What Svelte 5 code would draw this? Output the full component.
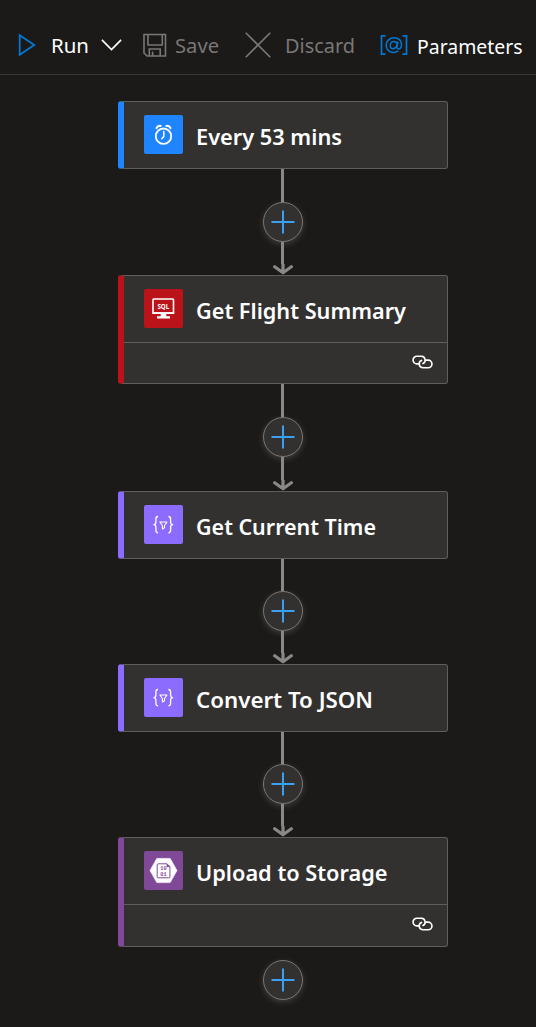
<script>
  const steps = [
    { title: 'Every 53 mins', width: 146, color: '#1e85ff', icon: 'clock', height: 68, link: 106, lead: 33 },
    { title: 'Get Flight Summary', width: 210, color: '#ba141a', icon: 'sql', height: 109, link: 107, lead: 33, linked: true },
    { title: 'Get Current Time', width: 180, color: '#8c6cff', icon: 'braces', height: 68, link: 105, lead: 32 },
    { title: 'Convert To JSON', width: 177, color: '#8c6cff', icon: 'braces', height: 68, link: 105, lead: 32 },
    { title: 'Upload to Storage', width: 191.5, color: '#804998', icon: 'blob', height: 110, link: 54, lead: 13, linked: true, last: true }
  ];
</script>

{#snippet label(text, width, size, baseline, boxHeight)}
  <svg class="label" width={width} height={boxHeight} style:font-size="{size}px">
    <text x="0" y={baseline} textLength={width} lengthAdjust="spacingAndGlyphs">{text}</text>
  </svg>
{/snippet}

<div class="app">
  <header class="toolbar">
    <button class="cmd run">
      <svg width="18" height="24" viewBox="0 0 18 24"><path d="M1.7 2.2V21.8L16.2 12Z" fill="none" stroke="#0078d4" stroke-width="1.8" /></svg>
      {@render label('Run', 38, 20, 22.5, 30)}
      <svg class="chevron" width="21" height="13" viewBox="0 0 21 13"><path d="M.9 1.9L10.5 11.5L20.1 1.9" fill="none" stroke="#fff" stroke-width="1.7" /></svg>
    </button>
    <button class="cmd save">
      <svg width="24" height="24" viewBox="0 0 24 24" fill="none" stroke="#797775" stroke-width="1.6">
        <path d="M1 1.5H22.5V23H4L1 20ZM5 1.5V12H19.3V1.5M6.3 23V16H17.2V23M9.6 18.5V23" />
      </svg>
      {@render label('Save', 44, 20, 22.5, 30)}
    </button>
    <button class="cmd discard">
      <svg width="26" height="26" viewBox="0 0 26 26"><path d="M.7 .7L25.3 25.3M25.3 .7L.7 25.3" fill="none" stroke="#797775" stroke-width="1.6" /></svg>
      {@render label('Discard', 70, 20, 22.5, 30)}
    </button>
    <button class="cmd params">
      <svg width="28" height="22" viewBox="0 0 28 22" fill="none" stroke="#0078d4" stroke-width="1.7">
        <path d="M5.5 1.8H1.5V20.2H5.5M22.5 1.8H26.5V20.2H22.5" />
        <path d="M18.3 16.9C12 20.6 6.2 16.8 6.2 11.3C6.2 6.7 9.8 3.8 14 3.8C18.6 3.8 21.5 6.6 21.5 10.2C21.5 13 20.1 14.9 18.5 14.9C17.2 14.9 16.8 13.8 17 12.5L17.9 7.5M17 10.1C16.8 6.7 10.2 6.2 10.2 11.8C10.2 16.3 15.9 15.3 17 11" stroke-width="1.5" />
      </svg>
      {@render label('Parameters', 105.5, 20, 23.5, 30)}
    </button>
  </header>

  <main class="flow">
    {#each steps as step}
      <article class="card" style:height="{step.height}px" style:--accent={step.color}>
        <div class="head">
          <span class="tile">
            {#if step.icon === 'clock'}
              <svg width="39" height="39" viewBox="0 0 39 39" fill="none" stroke="#fff" stroke-linecap="round">
                <circle cx="19.5" cy="21.2" r="7.7" stroke-width="1.8" />
                <path d="M19.8 16.5V21.5L17.8 23.8" stroke-width="1.5" />
                <path d="M12.5 13.2C13.2 11.7 14.8 10.7 16.7 10.9M26.5 13.2C25.8 11.7 24.2 10.7 22.3 10.9" stroke-width="2" />
              </svg>
            {:else if step.icon === 'sql'}
              <svg width="39" height="39" viewBox="0 0 39 39">
                <rect x="9" y="10" width="20.5" height="14" rx=".7" fill="none" stroke="#fff" stroke-width="1.6" />
                <path d="M8.2 23.2H30.3V25H8.2ZM16.7 25H22.3V27.2H26V29.5H13V27.2H16.7Z" fill="#fff" />
                <text class="sql" x="13.4" y="20.2" textLength="11.8" lengthAdjust="spacingAndGlyphs">SQL</text>
              </svg>
            {:else if step.icon === 'braces'}
              <svg width="39" height="39" viewBox="0 0 39 39" fill="none" stroke="#fff" stroke-width="1.3" stroke-linejoin="round">
                <path d="M14 11.5C12 11.5 11.9 12.5 11.9 14V17C11.9 18.6 11.5 19.5 9.9 19.6C11.5 19.7 11.9 20.7 11.9 22.2V25.3C11.9 26.8 12 27.8 14 27.8" />
                <path d="M24.4 11.5C26.4 11.5 26.6 12.5 26.6 14V17C26.6 18.6 27 19.5 28.6 19.6C27 19.7 26.6 20.7 26.6 22.2V25.3C26.6 26.8 26.4 27.8 24.4 27.8" />
                <path d="M15.9 17H22.9L20.5 20.5V22.7L18.4 24V20.5Z" stroke-width="1.1" />
              </svg>
            {:else}
              <svg width="39" height="39" viewBox="0 0 39 39">
                <path d="M12.8 7.4H26.2L33 19.5L26.2 31.6H12.8L6 19.5Z" fill="#fff" stroke="#fff" stroke-width=".6" stroke-linejoin="round" />
                <path d="M14.2 12.8H23L25.9 15.7V25.8Q25.9 26.8 24.9 26.8H14.2Q13.2 26.8 13.2 25.8V13.8Q13.2 12.8 14.2 12.8Z" fill="none" stroke="#804998" stroke-width="1" />
                <path d="M22.7 12.5V16H26.2Z" fill="#804998" />
                <text class="bits"><tspan x="16.3" y="19">10</tspan><tspan x="16.3" y="25">01</tspan></text>
              </svg>
            {/if}
          </span>
          {@render label(step.title, step.width, 22.4, 30, 39)}
        </div>
        {#if step.linked}
          <div class="foot">
            <svg width="21" height="14" viewBox="0 0 22 14" fill="none" stroke="#fff" stroke-width="1.7" stroke-linecap="round">
              <path d="M7.2 9H5.1A4 4 0 0 1 5.1 1H10A4 4 0 0 1 11.5 8.6" />
              <path d="M14.8 5H16.9A4 4 0 0 1 16.9 13H11.5A4 4 0 0 1 10 5.3" />
            </svg>
          </div>
        {/if}
      </article>

      <div class="link" style:height="{step.link}px">
        <span class="stem" class:hidden={step.last} style:height="{step.lead}px"></span>
        <button class="add" aria-label="Add">
          <svg width="24" height="24" viewBox="0 0 24 24"><path d="M12 .5V23.5M.5 12H23.5" stroke="#3aa0f3" stroke-width="2" /></svg>
        </button>
        {#if !step.last}
          <span class="stem grow"></span>
          <svg class="tip" width="22" height="11" viewBox="0 0 22 11"><path d="M11 0V8M2.7 2.8L11 8.8L19.3 2.8" fill="none" stroke="#8a8886" stroke-width="3.2" stroke-linecap="round" stroke-linejoin="round" /></svg>
        {/if}
      </div>
    {/each}
  </main>
</div>

<style>
  :global(body) {
    background: #1b1a19;
  }
  .app {
    height: 1027px;
    overflow: hidden;
    background: #1b1a19;
    color: #fff;
    font-family: 'Noto Sans', 'Open Sans', sans-serif;
  }
  .toolbar {
    box-sizing: border-box;
    height: 75px;
    padding: 15px 0 0 18px;
    display: flex;
    align-items: center;
    border-bottom: 1px solid #383736;
  }
  button {
    padding: 0;
    border: 0;
    background: none;
    color: inherit;
    font: inherit;
  }
  svg {
    display: block;
    flex: none;
  }
  .label {
    overflow: visible;
    fill: currentColor;
  }
  .cmd {
    display: flex;
    align-items: center;
  }
  .run { gap: 15px; }
  .run .label { margin-right: -3px; }
  .save { gap: 8px; margin-left: 21px; color: #797775; }
  .discard { gap: 14px; margin-left: 26px; color: #797775; }
  .params { gap: 9px; margin-left: 25px; }
  .flow {
    width: 330px;
    padding: 26px 0 0 118px;
  }
  .card {
    box-sizing: border-box;
    display: flex;
    flex-direction: column;
    border: 1px solid #605e5c;
    border-left: 6px solid var(--accent);
    border-radius: 3px;
    background: #323130;
  }
  .head {
    height: 39px;
    padding: 13px 0 14px 20px;
    display: flex;
    gap: 13.4px;
    font-weight: 600;
  }
  .tile {
    width: 39px;
    height: 39px;
    border-radius: 2px;
    background: var(--accent);
  }
  .foot {
    flex: 1;
    padding: 12px 14px 0 0;
    border-top: 1px solid #605e5c;
    display: flex;
    align-items: flex-start;
    justify-content: flex-end;
  }
  .link {
    width: 329px;
    display: flex;
    flex-direction: column;
    align-items: center;
  }
  .stem {
    flex: none;
    width: 3px;
    background: #8a8886;
  }
  .stem.hidden { visibility: hidden; }
  .stem.grow { flex: 1; }
  .add {
    box-sizing: border-box;
    flex: none;
    width: 40px;
    height: 40px;
    border: 1px solid #797775;
    border-radius: 50%;
    background: #323130;
    display: grid;
    place-items: center;
    box-shadow: 0 2px 6px rgba(200, 198, 196, 0.22);
  }
  .sql {
    font-size: 6.6px;
    font-weight: 700;
    fill: #fff;
  }
  .bits {
    font-family: 'Liberation Mono', monospace;
    font-size: 5.4px;
    font-weight: 700;
    fill: #804998;
  }
</style>
